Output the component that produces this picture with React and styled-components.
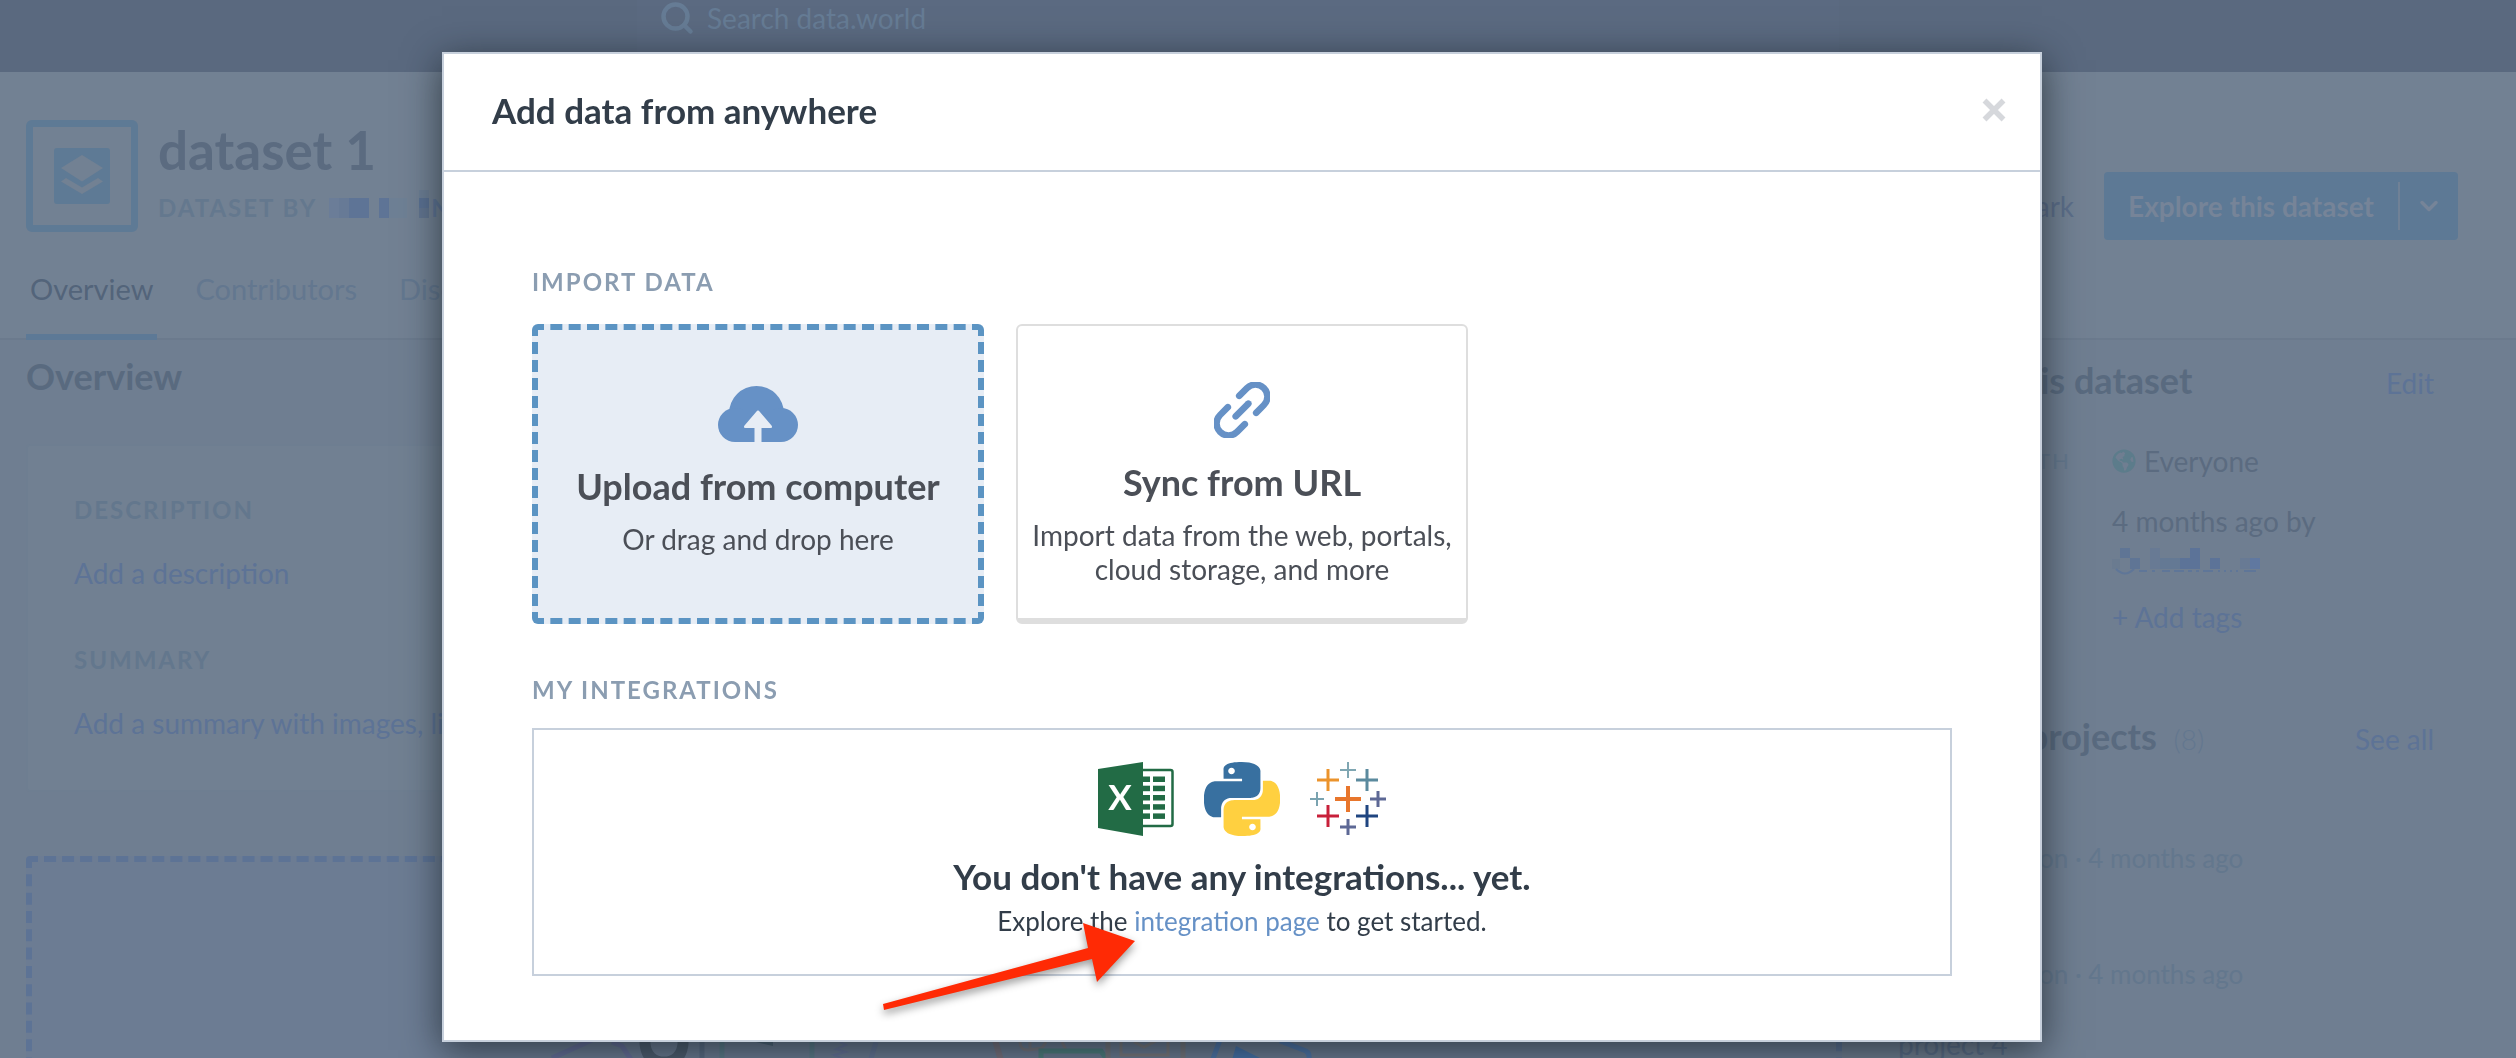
import React from "react";
import styled, { createGlobalStyle } from "styled-components";
import { Search, ChevronDown } from "lucide-react";
import { FaGlobeAmericas } from "react-icons/fa";

const projects = [
  { name: "project 2", meta: "Matt Anderson · 4 months ago" },
  { name: "project 3", meta: "Matt Anderson · 4 months ago" },
  { name: "project 4" }
];

const crosses = [
  { x: 38, y: 37, size: 13, width: 4, color: "#e8762c" },
  { x: 38, y: 8, size: 8, width: 2, color: "#7fa6b2" },
  { x: 18, y: 18, size: 11, width: 3, color: "#eb932c" },
  { x: 57, y: 18, size: 11, width: 3, color: "#5b8a9e" },
  { x: 7, y: 37, size: 7, width: 2, color: "#7aa3b0" },
  { x: 68, y: 37, size: 8, width: 3, color: "#5d6895" },
  { x: 18, y: 54, size: 11, width: 3, color: "#c8203a" },
  { x: 57, y: 54, size: 11, width: 3, color: "#1f4580" },
  { x: 38, y: 65, size: 8, width: 3, color: "#5d6895" }
];

const DatasetIcon = () =>
  <svg width="56" height="56" viewBox="0 0 56 56" aria-hidden="true">
    <rect width="56" height="56" rx="3" fill="#5e7a95" />
    <path d="M28 7 49 20 28 33.500 7 20z" fill="#728193" />
    <path d="M12 30 28 39.500 44 30 49 33.500 28 46 7 33.500z" fill="#728193" />
  </svg>;

const CloudIcon = () =>
  <svg width="80" height="56" viewBox="0 0 80 56" aria-hidden="true">
    <g fill="#6691c6">
      <circle cx="38.500" cy="27.500" r="27.500" />
      <circle cx="17" cy="39" r="17" />
      <circle cx="63" cy="39" r="17" />
      <rect x="17" y="32" width="46" height="24" />
    </g>
    <path
      d="M40 24.500q1 0 1.500 1L53.500 39.500q1.500 2.500-1 2.500H43.500v14h-7V42h-9q-2.500 0-1-2.500L38.500 25.500q.5-1 1.500-1z"
      fill="#e7edf5"
    />
  </svg>;

const LinkIcon = () =>
  <svg width="56" height="56" viewBox="0 0 56 56" aria-hidden="true">
    <g
      transform="rotate(-45 28 28)"
      fill="none"
      stroke="#6691c6"
      strokeWidth="6.500"
      strokeLinecap="round"
    >
      <path d="M20 16H9a12 12 0 0 0 0 24H20" />
      <path d="M36 16H47a12 12 0 0 1 0 24H36" />
      <path d="M19 28H37" />
    </g>
  </svg>;

const CloseIcon = () =>
  <svg width="24" height="24" viewBox="0 0 24 24" aria-hidden="true">
    <path d="M2.500 2.500 21.500 21.500M21.500 2.500 2.500 21.500" stroke="#d6d8dc" strokeWidth="5.500" />
  </svg>;

const ExcelLogo = () =>
  <svg width="76" height="74" viewBox="0 0 76 74" role="img" aria-label="Excel">
    <rect x="40" y="8" width="34.500" height="56" rx="2" fill="#fff" stroke="#226b45" strokeWidth="2.500" />
    {[14.5, 23.7, 33, 42.2, 51.4].map(y =>
      <g key={y} fill="#226b45">
        <rect x="44" y={y} width="8" height="5.500" />
        <rect x="55" y={y} width="12" height="5.500" />
      </g>
    )}
    <path d="M0 7 45 0V74L0 66z" fill="#226b45" />
    <text x="22" y="48" textAnchor="middle" fontFamily="Lato, sans-serif" fontWeight="700" fontSize="35" fill="#fff">
      X
    </text>
  </svg>;

const PythonLogo = () =>
  <svg width="76" height="74" viewBox="0 0 24 24" preserveAspectRatio="none" role="img" aria-label="Python">
    <path
      fill="#3870a0"
      d="M14.25.18l.9.2.73.26.59.3.45.32.34.34.25.34.16.33.1.3.04.26.02.2-.01.13V8.5l-.05.63-.13.55-.21.46-.26.38-.3.31-.33.25-.35.19-.35.14-.33.1-.3.07-.26.04-.21.02H8.77l-.69.05-.59.14-.5.22-.41.27-.33.32-.27.35-.2.36-.15.37-.1.35-.07.32-.04.27-.02.21v3.06H3.17l-.21-.03-.28-.07-.32-.12-.35-.18-.36-.26-.36-.36-.35-.46-.32-.59-.28-.73-.21-.88-.14-1.05-.05-1.23.06-1.22.16-1.04.24-.87.32-.71.36-.57.4-.44.42-.33.42-.24.4-.16.36-.1.32-.05.24-.01h.16l.06.01h8.16v-.83H6.18l-.01-2.75-.02-.37.05-.34.11-.31.17-.28.25-.26.31-.23.38-.2.44-.18.51-.15.58-.12.64-.1.71-.06.77-.04.84-.02 1.27.05zm-6.3 1.98l-.23.33-.08.41.08.41.23.34.33.22.41.09.41-.09.33-.22.23-.34.08-.41-.08-.41-.23-.33-.33-.22-.41-.09-.41.09z"
    />
    <path
      fill="#ffd040"
      d="M21.04 6.11l.28.06.32.12.35.18.36.27.36.35.35.47.32.59.28.73.21.88.14 1.04.05 1.23-.06 1.23-.16 1.04-.24.86-.32.71-.36.57-.4.45-.42.33-.42.24-.4.16-.36.09-.32.05-.24.02-.16-.01h-8.22v.82h5.84l.01 2.76.02.36-.05.34-.11.31-.17.29-.25.25-.31.24-.38.2-.44.17-.51.15-.58.13-.64.09-.71.07-.77.04-.84.01-1.27-.04-1.07-.14-.9-.2-.73-.25-.59-.3-.45-.33-.34-.34-.25-.34-.16-.33-.1-.3-.04-.25-.02-.2.01-.13v-5.34l.05-.64.13-.54.21-.46.26-.38.3-.32.33-.24.35-.2.35-.14.33-.1.3-.06.26-.04.21-.02.13-.01h5.84l.69-.05.59-.14.5-.21.41-.28.33-.32.27-.35.2-.36.15-.36.1-.35.07-.32.04-.28.02-.21V6.07h2.09l.14.01zm-6.47 14.25l-.23.33-.08.41.08.41.23.33.33.23.41.08.41-.08.33-.23.23-.33.08-.41-.08-.41-.23-.33-.33-.23-.41-.08-.41.08z"
    />
  </svg>;

const TableauLogo = () =>
  <svg width="76" height="74" viewBox="0 0 76 74" role="img" aria-label="Tableau">
    {crosses.map(c =>
      <path
        key={`${c.x}-${c.y}`}
        d={`M${c.x - c.size} ${c.y}h${c.size * 2}M${c.x} ${c.y - c.size}v${c.size * 2}`}
        stroke={c.color}
        strokeWidth={c.width}
      />
    )}
  </svg>;

// hidden owner name
const OwnerBlocks = () =>
  <svg width="104" height="28" viewBox="0 0 104 28" aria-hidden="true">
    <rect x="2" y="8" width="10" height="20" fill="#6b7d98" />
    <rect x="12" y="8" width="10" height="20" fill="#677a96" />
    <rect x="22" y="8" width="20" height="20" fill="#5e7496" />
    <rect x="52" y="8" width="10" height="20" fill="#5e7496" />
    <rect x="62" y="8" width="18" height="20" fill="#6e8095" />
    <rect x="92" width="10" height="8" fill="#6b7d93" />
    <rect x="92" y="8" width="10" height="10" fill="#5a7092" />
    <rect x="92" y="18" width="10" height="10" fill="#61748f" />
  </svg>;

const AuthorBlocks = () =>
  <svg width="148" height="28" viewBox="0 0 148 28" aria-hidden="true">
    <rect x="0" y="11" width="8" height="10" fill="#6a7b90" />
    <rect x="8" width="10" height="10" fill="#5f7595" />
    <rect x="18" y="10" width="10" height="11" fill="#5f7595" />
    <rect x="38" width="10" height="21" fill="#687a94" />
    <rect x="48" y="10" width="20" height="11" fill="#647994" />
    <rect x="68" y="10" width="10" height="11" fill="#5c7398" />
    <rect x="78" width="10" height="21" fill="#5c7398" />
    <rect x="98" y="10" width="10" height="11" fill="#5c7398" />
    <rect x="128" y="10" width="10" height="11" fill="#687a94" />
    <rect x="138" y="10" width="10" height="11" fill="#6078a0" />
    <path d="M4 21q9 9 18 0M27 23h8M40 23h3M50 23h8M62 23h10M76 23h4M84 23h3M91 23h10M106 23h2M112 23h2M118 23h2M124 23h2M132 23h12" stroke="#5f7698" strokeWidth="2" fill="none" />
  </svg>;

const DropArt = () =>
  <svg width="780" height="60" viewBox="544 1042 780 60" fill="none" strokeWidth="5" aria-hidden="true">
    <path d="M552 1058 592 1040M612 1042 622 1046 634 1064" stroke="#67709b" />
    <path d="M645 1036v8q2 18 19 18t19-18v-8" stroke="#4d5d70" strokeWidth="11" />
    <path d="M702 1040v62" stroke="#5a6d86" />
    <path d="M722 1040v62M812 1040v62" stroke="#5c7d8b" />
    <path d="M756 1042h17v4z" fill="#4d6478" />
    <path d="M840 1042l6 3-10 4 10 3-12 3 9 4-8 3" stroke="#67759a" strokeWidth="2" />
    <path d="M876 1042 870 1062" stroke="#657698" />
    <path d="M995 1040 1002 1064" stroke="#7a7480" strokeWidth="6" />
    <path d="M1020 1042q0 8 8 8l14-2 4-6M1062 1042l4 8M1030 1042v6" stroke="#7b7980" strokeWidth="3" />
    <path d="M1041 1064v-13h60l9 13" stroke="#4f8080" />
    <path d="M1121 1040v15h47v-15M1134 1042l10 5 12-6" stroke="#7c7b7e" strokeWidth="3" />
    <path d="M1108 1040v24M1183 1040v24" stroke="#77787f" />
    <path d="M1211 1064 1220 1040M1280 1041 1306 1051q5 3 2 12" stroke="#4f77ac" />
    <path d="M1236 1046 1264 1060H1232z" fill="#4673ac" />
  </svg>;

const Arrow = () =>
  <svg width="270" height="100" viewBox="874 920 270 100" aria-hidden="true">
    <path d="M1135 941 1083 923 1088 948 883 1004 884 1010 1092 959 1097 982z" fill="#ff2a05" />
  </svg>;

const App = () =>
  <Page>
    <GlobalStyle />
    <TopBar>
      <SearchBox>
        <Search size={36} strokeWidth={3} aria-hidden="true" />
        <input type="search" placeholder="Search data.world" aria-label="Search data.world" />
      </SearchBox>
    </TopBar>

    <DatasetHeader>
      <HeaderRow>
        <IconFrame>
          <DatasetIcon />
        </IconFrame>
        <div>
          <DatasetTitle>dataset 1</DatasetTitle>
          <Owner>
            DATASET BY <OwnerBlocks /> <span>N</span>
          </Owner>
        </div>
        <Actions>
          <PlainButton type="button">Bookmark</PlainButton>
          <ExploreGroup>
            <ExploreButton type="button">Explore this dataset</ExploreButton>
            <ExploreToggle type="button" aria-label="More explore options">
              <ChevronDown size={28} strokeWidth={3} />
            </ExploreToggle>
          </ExploreGroup>
        </Actions>
      </HeaderRow>
      <Tabs>
        <Tab href="#overview" $active>Overview</Tab>
        <Tab href="#contributors">Contributors</Tab>
        <Tab href="#discussion">Discussion</Tab>
      </Tabs>
    </DatasetHeader>

    <Content>
      <main>
        <Heading>Overview</Heading>
        <SummaryCard>
          <MutedLabel>DESCRIPTION</MutedLabel>
          <MutedLink href="#description">Add a description</MutedLink>
          <MutedLabel>SUMMARY</MutedLabel>
          <MutedLink href="#summary">Add a summary with images, links and more</MutedLink>
        </SummaryCard>
        <DropZone>
          <DropArt />
        </DropZone>
      </main>

      <Sidebar>
        <SideHeader>
          <Heading>About this dataset</Heading>
          <MutedLink href="#edit">Edit</MutedLink>
        </SideHeader>
        <Facts>
          <dt>SHARED WITH</dt>
          <dd>
            <FaGlobeAmericas size={24} color="#5c7c8b" />
            Everyone
          </dd>
          <dt>CREATED</dt>
          <dd>
            4 months ago by
            <AuthorBlocks />
          </dd>
          <dt>TAGS</dt>
          <dd>
            <MutedLink href="#tags">+ Add tags</MutedLink>
          </dd>
        </Facts>
        <SideHeader>
          <Heading>
            Related projects <small>(8)</small>
          </Heading>
          <MutedLink href="#projects">See all</MutedLink>
        </SideHeader>
        <ProjectList>
          {projects.map(project =>
            <li key={project.name}>
              <a href="#project">{project.name}</a>
              {project.meta ? <p>{project.meta}</p> : null}
            </li>
          )}
        </ProjectList>
      </Sidebar>
    </Content>

    <Overlay>
      <Modal role="dialog" aria-modal="true" aria-labelledby="modal-title">
        <ModalHeader>
          <h2 id="modal-title">Add data from anywhere</h2>
          <CloseButton type="button" aria-label="Close">
            <CloseIcon />
          </CloseButton>
        </ModalHeader>
        <ModalBody>
          <SectionLabel>IMPORT DATA</SectionLabel>
          <ImportOptions>
            <ImportCard type="button" $dashed>
              <CloudIcon />
              <strong>Upload from computer</strong>
              <span>Or drag and drop here</span>
            </ImportCard>
            <ImportCard type="button">
              <LinkIcon />
              <strong>Sync from URL</strong>
              <span>Import data from the web, portals, cloud storage, and more</span>
            </ImportCard>
          </ImportOptions>
          <SectionLabel $tight>MY INTEGRATIONS</SectionLabel>
          <Integrations>
            <Logos>
              <ExcelLogo />
              <PythonLogo />
              <TableauLogo />
            </Logos>
            <h4>You don't have any integrations... yet.</h4>
            <p>
              Explore the <a href="#integrations">integration page</a> to get started.
            </p>
            <Pointer>
              <Arrow />
            </Pointer>
          </Integrations>
        </ModalBody>
      </Modal>
    </Overlay>
  </Page>;

const GlobalStyle = createGlobalStyle`
  * {
    box-sizing: border-box;
  }
  body {
    margin: 0;
    font-family: Lato, "Liberation Sans", sans-serif;
    font-size: 28px;
    line-height: 34px;
    color: #5b6b80;
  }
  h1, h2, h3, h4, p, dl, dd, ul {
    margin: 0;
    padding: 0;
  }
  a {
    text-decoration: none;
  }
  button, input {
    font: inherit;
    color: inherit;
    border: 0;
    padding: 0;
    background: none;
  }
  svg {
    flex: none;
  }
`;

const Page = styled.div`
  height: 100vh;
  overflow: hidden;
  background: #6f7e91;
`;

const TopBar = styled.header`
  display: flex;
  justify-content: center;
  height: 72px;
  padding-right: 40px;
  background: #5a697f;
`;

const SearchBox = styled.label`
  display: flex;
  align-items: center;
  gap: 12px;
  width: 1202px;
  height: 56px;
  padding: 0 22px 20px;
  background: #5b6a81;
  color: #667c95;

  input {
    flex: 1;
  }
  input::placeholder {
    color: #667c95;
    opacity: 1;
  }
`;

const DatasetHeader = styled.section`
  padding: 48px 58px 0 26px;
  border-bottom: 2px solid #6b7a8d;
  background: #728193;
`;

const HeaderRow = styled.div`
  display: flex;
  gap: 20px;
  height: 112px;
`;

const IconFrame = styled.div`
  display: flex;
  align-items: center;
  justify-content: center;
  width: 112px;
  height: 112px;
  border: 7px solid #5e7a95;
  border-radius: 6px;
`;

const DatasetTitle = styled.h1`
  font-size: 53px;
  line-height: 60px;
`;

const Owner = styled.p`
  display: flex;
  align-items: flex-end;
  margin-top: 10px;
  font-size: 24px;
  font-weight: bold;
  line-height: 32px;
  letter-spacing: 2px;
  color: #64788e;

  svg {
    margin: 0 0 6px 10px;
  }
  span {
    color: #5f7596;
  }
`;

const Actions = styled.div`
  display: flex;
  align-items: center;
  gap: 30px;
  height: 68px;
  margin: 52px 0 0 auto;
`;

const PlainButton = styled.button`
  color: #5c6e8a;
`;

const ExploreGroup = styled.div`
  display: flex;
  align-items: center;
  height: 68px;
  border-radius: 4px;
  background: #5d7995;
  color: #768498;
`;

const ExploreButton = styled.button`
  padding: 0 24px;
  font-weight: bold;
`;

const ExploreToggle = styled.button`
  display: flex;
  align-items: center;
  justify-content: center;
  width: 60px;
  height: 48px;
  border-left: 2px solid #708196;
`;

const Tabs = styled.nav`
  display: flex;
  gap: 34px;
  margin: 40px 0 -2px;
  font-size: 29px;
`;

const Tab = styled.a`
  padding: 0 4px 28px;
  border-bottom: 6px solid ${props => (props.$active ? "#5d7996" : "transparent")};
  color: ${props => (props.$active ? "#53647a" : "#63778f")};
`;

const Content = styled.div`
  display: grid;
  grid-template-columns: minmax(0, 1fr) 560px;
  gap: 56px;
  padding: 14px 58px 0 26px;
`;

const Heading = styled.h2`
  font-size: 36px;
  line-height: 44px;
  color: #596a7f;

  small {
    margin-left: 8px;
    font-size: 28px;
    font-weight: 300;
    color: #63778f;
  }
`;

const SummaryCard = styled.section`
  display: flex;
  flex-direction: column;
  align-items: flex-start;
  margin-top: 46px;
  padding: 48px 46px 50px;
  border: 2px solid #6e7e91;
  border-radius: 4px;
  background: #718092;
`;

const MutedLabel = styled.h3`
  margin-bottom: 30px;
  font-size: 24px;
  line-height: 32px;
  letter-spacing: 2px;
  color: #63778d;

  a + & {
    margin-top: 54px;
  }
`;

const MutedLink = styled.a`
  color: #5d7396;
`;

const DropZone = styled.section`
  display: flex;
  justify-content: center;
  height: 360px;
  margin-top: 64px;
  padding-top: 180px;
  border: 6px dashed #5d7395;
  border-radius: 4px;
  background: #6c7c93;
`;

const Sidebar = styled.aside`
  padding: 4px 24px 0 0;
`;

const SideHeader = styled.div`
  display: flex;
  justify-content: space-between;
  align-items: baseline;
`;

const Facts = styled.dl`
  display: grid;
  grid-template-columns: 214px 1fr;
  row-gap: 22px;
  margin: 40px 0 78px;
  line-height: 38px;

  dt {
    font-size: 22px;
    letter-spacing: 2px;
    color: #63778d;
  }
  dd {
    display: flex;
    flex-wrap: wrap;
    align-items: center;
    column-gap: 8px;
  }
  dd svg[width="148"] {
    margin-top: 8px;
  }
`;

const ProjectList = styled.ul`
  display: flex;
  flex-direction: column;
  gap: 34px;
  margin-top: 32px;
  list-style: none;

  a {
    display: block;
    margin-bottom: 10px;
    line-height: 38px;
    color: #5a6d88;
  }
  p {
    font-size: 26px;
    color: #63778d;
  }
`;

const Overlay = styled.div`
  position: fixed;
  inset: 0;
  display: flex;
  align-items: flex-start;
  justify-content: center;
  padding: 52px 32px 0 0;
`;

const Modal = styled.div`
  width: 100%;
  max-width: 1600px;
  border: 2px solid #c7d0dc;
  background: #fff;
  color: #323d49;
  box-shadow: 0 8px 36px rgba(20, 28, 34, 0.7);
`;

const ModalHeader = styled.div`
  display: flex;
  justify-content: space-between;
  align-items: center;
  padding: 34px 34px 38px 48px;
  border-bottom: 2px solid #c7d0dc;

  h2 {
    font-size: 35px;
    line-height: 44px;
  }
`;

const CloseButton = styled.button`
  display: flex;
`;

const ModalBody = styled.div`
  padding: 94px 88px 64px;
`;

const SectionLabel = styled.h3`
  margin-bottom: ${props => (props.$tight ? 22 : 26)}px;
  font-size: 24px;
  line-height: 32px;
  letter-spacing: 2px;
  color: #8b9db1;
`;

const ImportOptions = styled.div`
  display: grid;
  grid-template-columns: repeat(auto-fill, 452px);
  gap: 32px;
  margin-bottom: 50px;
`;

const ImportCard = styled.button`
  display: flex;
  flex-direction: column;
  align-items: center;
  min-height: 300px;
  padding-top: 56px;
  border: ${props => (props.$dashed ? "6px dashed #5b94c3" : "2px solid #dedede")};
  border-bottom-width: 6px;
  border-radius: 6px;
  background: ${props => (props.$dashed ? "#e7edf5" : "#fff")};
  color: #4b4f57;

  strong {
    margin: 22px 0 14px;
    font-size: 36px;
    line-height: 44px;
  }
`;

const Integrations = styled.section`
  position: relative;
  padding: 32px 0 36px;
  border: 2px solid #c7d0dc;
  text-align: center;

  h4 {
    margin: 18px 0 6px;
    font-size: 35px;
    line-height: 44px;
  }
  p {
    font-size: 26px;
  }
  a {
    color: #6691c6;
  }
`;

const Logos = styled.div`
  display: flex;
  justify-content: center;
  gap: 30px;
`;

const Pointer = styled.div`
  position: absolute;
  top: 190px;
  left: calc(50% - 368px);
  pointer-events: none;

  svg {
    filter: drop-shadow(0 4px 4px rgba(0, 0, 0, 0.4));
  }
`;

export default App;
